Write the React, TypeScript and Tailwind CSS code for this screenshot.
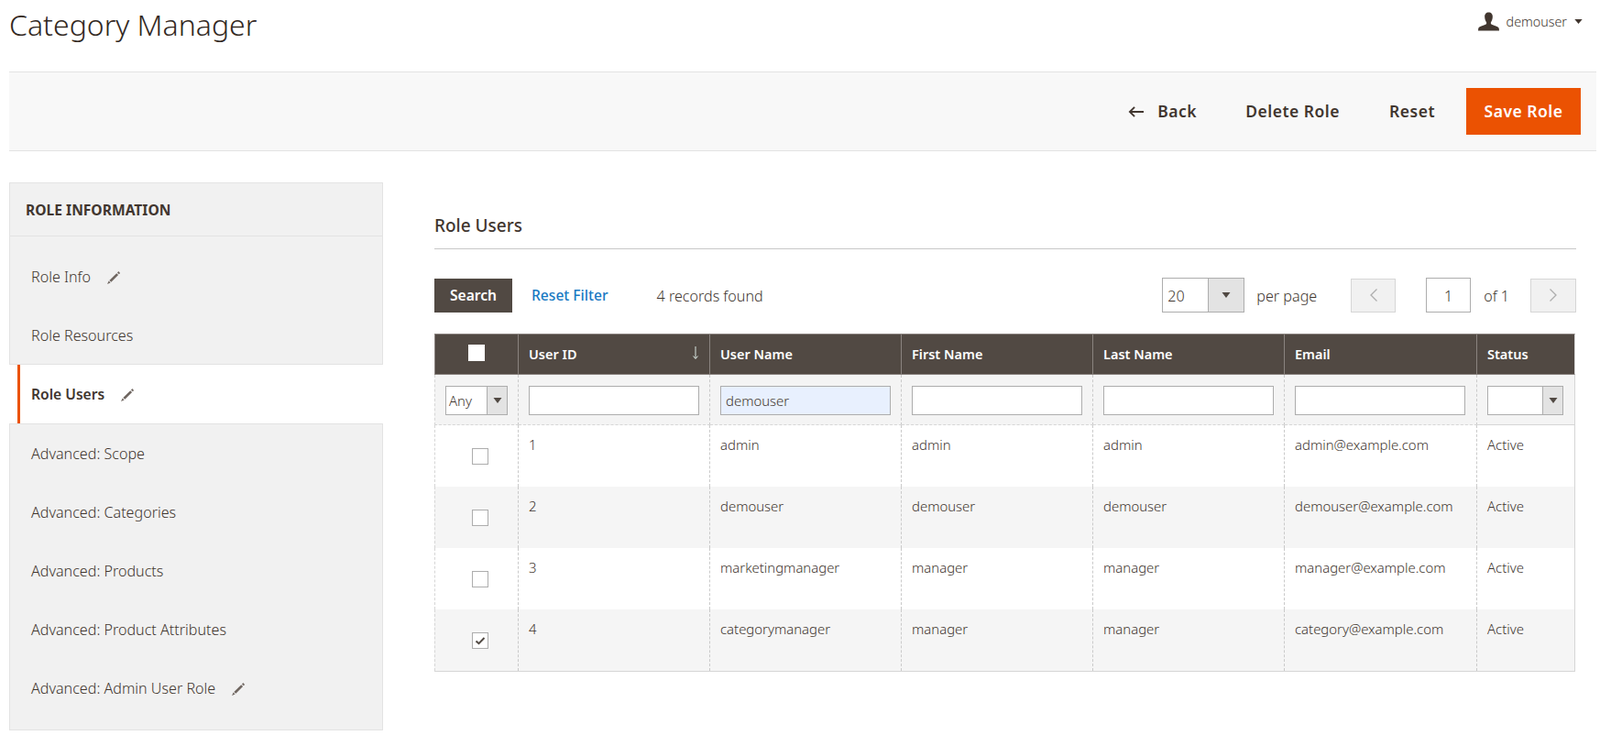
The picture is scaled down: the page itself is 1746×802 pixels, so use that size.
import React from 'react'

const users = [
  { id: 1, name: 'admin', first: 'admin', last: 'admin', email: 'admin@example.com', checked: false },
  { id: 2, name: 'demouser', first: 'demouser', last: 'demouser', email: 'demouser@example.com', checked: false },
  { id: 3, name: 'marketingmanager', first: 'manager', last: 'manager', email: 'manager@example.com', checked: false },
  { id: 4, name: 'categorymanager', first: 'manager', last: 'manager', email: 'category@example.com', checked: true },
]

const heads = ['User Name', 'First Name', 'Last Name', 'Email', 'Status']

function Pencil() {
  return (
    <svg viewBox="0 0 16 16" className="h-[16px] w-[16px] fill-[#6f6660]">
      <path d="M11.2 3.2 L13.1 5.1 L5.4 12.8 L3.3 10.9 Z" />
      <path d="M12 2.4 L13.3 1.1 L15.1 2.9 L13.8 4.2 Z" />
      <path d="M2.7 11.6 L4.6 13.4 L1 15 Z" />
    </svg>
  )
}

function Arrow() {
  return (
    <svg viewBox="0 0 10 6" className="h-[6px] w-[10px] fill-[#514943]">
      <path d="M0.5 0 H9.5 L5 6 Z" />
    </svg>
  )
}

function Select({ value, width, arrow }: { value: string; width: string; arrow: string }) {
  return (
    <div className={`flex border border-[#adadad] bg-white ${width}`}>
      <span className="flex-1 pl-[3px] leading-[30px]">{value}</span>
      <span className={`flex items-center justify-center border-l border-[#adadad] bg-[#e3e3e3] ${arrow}`}>
        <Arrow />
      </span>
    </div>
  )
}

function Check({ checked }: { checked?: boolean }) {
  return (
    <span className="mt-[25px] ml-[40px] flex h-[18px] w-[18px] items-center justify-center border border-[#adadad] bg-white">
      {checked && (
        <svg viewBox="0 0 12 12" className="h-[12px] w-[12px] fill-none stroke-[#514943] stroke-[2]">
          <path d="M1.5 6.5 L4.5 9.2 L10.5 3" />
        </svg>
      )}
    </span>
  )
}

function NavItem({ label, edit }: { label: string; edit?: boolean }) {
  return (
    <div className="flex h-[64px] items-center gap-[17px] pt-[3px] pl-[23px]">
      <span>{label}</span>
      {edit && <Pencil />}
    </div>
  )
}

export default function App() {
  return (
    <div className="h-[802px] w-[1746px] overflow-hidden bg-white font-['Open_Sans',sans-serif] text-[16.1px] font-[350] text-[#41362f]">
      <header className="ml-[10px] flex h-[78px] w-[1732px] items-start justify-between">
        <h1 className="mt-[5px] text-[32px] leading-[44px] font-light text-[#33291f]">Category Manager</h1>
        <div className="mt-[13px] mr-[15px] flex items-center text-[14.3px]">
          <svg viewBox="0 0 24 21" className="mr-[8px] h-[21px] w-[23px] fill-[#41362f]">
            <path d="M12 0 C9 0 7.2 2 7.5 5.5 C7.7 8 8.5 10 9.5 11.5 L9.5 13 C7 15 1.5 15.5 0.3 18 L0 21 H24 L23.7 18 C22.5 15.5 17 15 14.5 13 L14.5 11.5 C15.5 10 16.3 8 16.5 5.5 C16.8 2 15 0 12 0 Z" />
          </svg>
          <span>demouser</span>
          <svg viewBox="0 0 10 6" className="ml-[8px] h-[5px] w-[9px] fill-[#41362f]">
            <path d="M0 0 H10 L5 6 Z" />
          </svg>
        </div>
      </header>

      <div className="ml-[10px] flex h-[87px] w-[1732px] items-center justify-end border-y border-[#e3e3e3] bg-[#f8f8f8] pr-[17px] text-[17.5px] font-semibold tracking-[0.5px]">
        <svg viewBox="0 0 18 14" className="h-[14px] w-[17px] fill-none stroke-[#41362f] stroke-[2]">
          <path d="M18 7 H2 M7.5 1.5 L2 7 L7.5 12.5" />
        </svg>
        <span className="ml-[15px]">Back</span>
        <span className="ml-[53px]">Delete Role</span>
        <span className="ml-[54px]">Reset</span>
        <button className="ml-[34px] h-[51px] w-[125px] bg-[#eb5202] text-white">Save Role</button>
      </div>

      <div className="mt-[34px] ml-[10px] flex items-start">
        <aside className="w-[408px]">
          <div className="border border-[#e3e3e3] bg-[#f1f1f1]">
            <div className="flex h-[58px] items-center border-b border-[#e3e3e3] pt-[2px] pl-[17px] text-[15.6px] font-bold">
              ROLE INFORMATION
            </div>
            <div className="pt-[11px]">
              <NavItem label="Role Info" edit />
              <NavItem label="Role Resources" />
            </div>
          </div>
          <div className="ml-[9px] flex h-[64px] items-center gap-[17px] border-l-[3px] border-[#eb5202] bg-white pt-[2px] pl-[12px] text-[15.6px] font-semibold">
            <span>Role Users</span>
            <Pencil />
          </div>
          <div className="border border-[#e3e3e3] bg-[#f1f1f1] pb-[14px]">
            <div className="-mt-[1px]">
              <NavItem label="Advanced: Scope" />
              <NavItem label="Advanced: Categories" />
              <NavItem label="Advanced: Products" />
              <NavItem label="Advanced: Product Attributes" />
              <NavItem label="Advanced: Admin User Role" edit />
            </div>
          </div>
        </aside>

        <main className="ml-[56px] w-[1246px]">
          <h2 className="flex h-[73px] items-end border-b border-[#c8c8c8] pb-[11px] text-[19px] leading-[28px] font-medium">
            Role Users
          </h2>

          <div className="mt-[31px] flex h-[38px] items-center">
            <button className="h-[37px] w-[85px] bg-[#514943] pt-[2px] text-[15.6px] font-semibold text-white">Search</button>
            <span className="mt-[2px] ml-[21px] text-[15.6px] font-medium text-[#1979c3]">Reset Filter</span>
            <span className="mt-[2px] ml-[53px]">4 records found</span>
            <div className="ml-auto flex items-center">
              <div className="flex h-[38px] w-[90px] border border-[#adadad] bg-white">
                <span className="flex-1 pl-[5px] leading-[38px]">20</span>
                <span className="flex w-[39px] items-center justify-center border-l border-[#adadad] bg-[#e3e3e3]">
                  <Arrow />
                </span>
              </div>
              <span className="mt-[2px] ml-[13px]">per page</span>
              <span className="ml-[37px] flex h-[37px] w-[49px] items-center justify-center border border-[#d6d6d6] bg-[#f1f1f1]">
                <svg viewBox="0 0 10 14" className="h-[14px] w-[10px] fill-none stroke-[#adadad] stroke-[1.3]">
                  <path d="M8.5 0.5 L2 7 L8.5 13.5" />
                </svg>
              </span>
              <span className="ml-[33px] flex h-[38px] w-[49px] items-center justify-center border border-[#adadad] pt-[2px]">1</span>
              <span className="mt-[2px] ml-[14px]">of 1</span>
              <span className="ml-[23px] flex h-[37px] w-[50px] items-center justify-center border border-[#d6d6d6] bg-[#f1f1f1]">
                <svg viewBox="0 0 10 14" className="h-[14px] w-[10px] fill-none stroke-[#adadad] stroke-[1.3]">
                  <path d="M1.5 0.5 L8 7 L1.5 13.5" />
                </svg>
              </span>
            </div>
          </div>

          <table className="mt-[23px] w-[1245px] table-fixed border-separate border-spacing-0 text-[14.9px]">
            <colgroup>
              <col className="w-[92px]" />
              <col className="w-[209px]" />
              <col className="w-[209px]" />
              <col className="w-[209px]" />
              <col className="w-[209px]" />
              <col className="w-[210px]" />
              <col className="w-[107px]" />
            </colgroup>
            <thead>
              <tr className="h-[45px] bg-[#514943] text-left text-[14.5px] font-semibold text-white">
                <th className="border-y border-l border-r border-[#8a837f] p-0 align-top">
                  <span className="mt-[11px] ml-[36px] block h-[18px] w-[18px] bg-white" />
                </th>
                <th className="border-y border-r border-[#8a837f] pl-[11px] font-semibold">
                  <div className="flex items-center justify-between pr-[11px]">
                    User ID
                    <svg viewBox="0 0 8 14" className="-mt-[3px] h-[14px] w-[8px] fill-none stroke-[#d9e6e0] stroke-[1]">
                      <path d="M4 0 V13 M1.5 10.5 L4 13.5 L6.5 10.5" />
                    </svg>
                  </div>
                </th>
                {heads.map((head, index) => (
                  <th key={index} className="border-y border-r border-[#8a837f] pl-[11px] font-semibold last:border-r-[#d6d6d6]">
                    {head}
                  </th>
                ))}
              </tr>
            </thead>
            <tbody>
              <tr className="h-[55px] bg-[#f4f4f4]">
                <td className="border-r border-b border-l border-dashed border-r-[#cacaca] border-b-[#d6d6d6] border-l-[#d6d6d6] pt-[2px] pl-[11px]">
                  <Select value="Any" width="h-[32px] w-[68px]" arrow="w-[22px]" />
                </td>
                {['', 'demouser', '', '', ''].map((value, index) => (
                  <td key={index} className="border-r border-b border-dashed border-r-[#cacaca] border-b-[#d6d6d6] pt-[2px] pl-[11px]">
                    <input
                      readOnly
                      defaultValue={value}
                      className={`block h-[32px] w-[186px] border border-[#adadad] pl-[5px] text-[14.9px] outline-none ${value ? 'bg-[#e8f0fe]' : 'bg-white'}`}
                    />
                  </td>
                ))}
                <td className="border-r border-b border-[#d6d6d6] pt-[2px] pl-[11px]">
                  <Select value="" width="h-[32px] w-[83px]" arrow="w-[22px]" />
                </td>
              </tr>
              {users.map((user, row) => (
                <tr key={user.id} className={`h-[67px] align-top ${row % 2 === 1 ? 'bg-[#f5f5f5]' : 'bg-white'}`}>
                  <td className="border-r border-l border-dashed border-r-[#cacaca] border-l-[#d6d6d6] p-0">
                    <Check checked={user.checked} />
                  </td>
                  {[user.id, user.name, user.first, user.last, user.email].map((value, index) => (
                    <td key={index} className="border-r border-dashed border-[#cacaca] pt-[10px] pl-[11px]">
                      {value}
                    </td>
                  ))}
                  <td className="border-r border-[#d6d6d6] pt-[10px] pl-[11px]">Active</td>
                </tr>
              ))}
              <tr>
                <td colSpan={7} className="h-0 border-b border-[#d6d6d6] p-0" />
              </tr>
            </tbody>
          </table>
        </main>
      </div>
    </div>
  )
}
